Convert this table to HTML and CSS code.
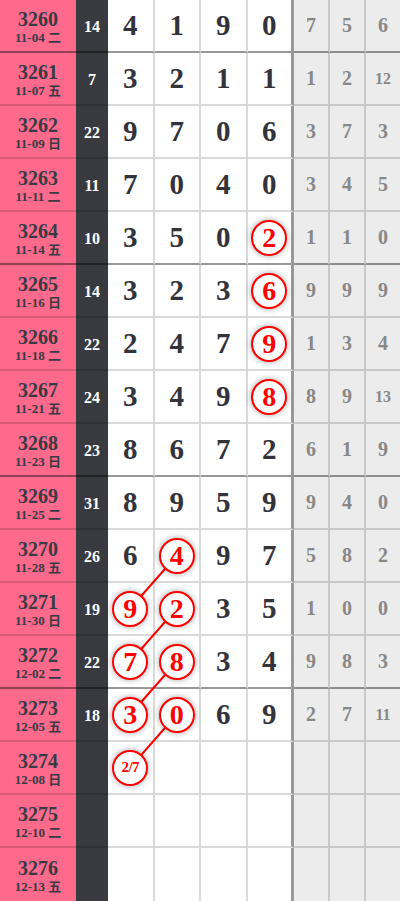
FILE: index.html
```html
<!DOCTYPE html>
<html lang="zh">
<head>
    <meta charset="UTF-8">
    <meta name="viewport" content="width=device-width, initial-scale=1.0">
    <title>走势图</title>
    <link rel="stylesheet" href="styles.css">
</head>
<body>

<div class="board">
    <!-- connecting lines behind the balls -->
    <svg class="links" width="400" height="901" viewBox="0 0 400 901">
        <line x1="176.75" y1="555.5" x2="130.25" y2="608.5"/>
        <line x1="176.75" y1="608.5" x2="130.25" y2="661.5"/>
        <line x1="176.75" y1="661.5" x2="130.25" y2="714.5"/>
        <line x1="176.75" y1="714.5" x2="130.25" y2="767.5"/>
    </svg>

    <div class="row group">
        <div class="cell issue"><b>3260</b><span>11-04 二</span></div>
        <div class="cell sum">14</div>
        <div class="cell num">4</div><div class="cell num">1</div><div class="cell num">9</div><div class="cell num last">0</div>
        <div class="cell gap">7</div><div class="cell gap">5</div><div class="cell gap end">6</div>
    </div>
    <div class="row">
        <div class="cell issue"><b>3261</b><span>11-07 五</span></div>
        <div class="cell sum">7</div>
        <div class="cell num">3</div><div class="cell num">2</div><div class="cell num">1</div><div class="cell num last">1</div>
        <div class="cell gap">1</div><div class="cell gap">2</div><div class="cell gap end small">12</div>
    </div>
    <div class="row">
        <div class="cell issue"><b>3262</b><span>11-09 日</span></div>
        <div class="cell sum">22</div>
        <div class="cell num">9</div><div class="cell num">7</div><div class="cell num">0</div><div class="cell num last">6</div>
        <div class="cell gap">3</div><div class="cell gap">7</div><div class="cell gap end">3</div>
    </div>
    <div class="row">
        <div class="cell issue"><b>3263</b><span>11-11 二</span></div>
        <div class="cell sum">11</div>
        <div class="cell num">7</div><div class="cell num">0</div><div class="cell num">4</div><div class="cell num last">0</div>
        <div class="cell gap">3</div><div class="cell gap">4</div><div class="cell gap end">5</div>
    </div>
    <div class="row group">
        <div class="cell issue"><b>3264</b><span>11-14 五</span></div>
        <div class="cell sum">10</div>
        <div class="cell num">3</div><div class="cell num">5</div><div class="cell num">0</div><div class="cell num last"><i class="ball">2</i></div>
        <div class="cell gap">1</div><div class="cell gap">1</div><div class="cell gap end">0</div>
    </div>
    <div class="row">
        <div class="cell issue"><b>3265</b><span>11-16 日</span></div>
        <div class="cell sum">14</div>
        <div class="cell num">3</div><div class="cell num">2</div><div class="cell num">3</div><div class="cell num last"><i class="ball">6</i></div>
        <div class="cell gap">9</div><div class="cell gap">9</div><div class="cell gap end">9</div>
    </div>
    <div class="row">
        <div class="cell issue"><b>3266</b><span>11-18 二</span></div>
        <div class="cell sum">22</div>
        <div class="cell num">2</div><div class="cell num">4</div><div class="cell num">7</div><div class="cell num last"><i class="ball">9</i></div>
        <div class="cell gap">1</div><div class="cell gap">3</div><div class="cell gap end">4</div>
    </div>
    <div class="row">
        <div class="cell issue"><b>3267</b><span>11-21 五</span></div>
        <div class="cell sum">24</div>
        <div class="cell num">3</div><div class="cell num">4</div><div class="cell num">9</div><div class="cell num last"><i class="ball">8</i></div>
        <div class="cell gap">8</div><div class="cell gap">9</div><div class="cell gap end small">13</div>
    </div>
    <div class="row group">
        <div class="cell issue"><b>3268</b><span>11-23 日</span></div>
        <div class="cell sum">23</div>
        <div class="cell num">8</div><div class="cell num">6</div><div class="cell num">7</div><div class="cell num last">2</div>
        <div class="cell gap">6</div><div class="cell gap">1</div><div class="cell gap end">9</div>
    </div>
    <div class="row">
        <div class="cell issue"><b>3269</b><span>11-25 二</span></div>
        <div class="cell sum">31</div>
        <div class="cell num">8</div><div class="cell num">9</div><div class="cell num">5</div><div class="cell num last">9</div>
        <div class="cell gap">9</div><div class="cell gap">4</div><div class="cell gap end">0</div>
    </div>
    <div class="row">
        <div class="cell issue"><b>3270</b><span>11-28 五</span></div>
        <div class="cell sum">26</div>
        <div class="cell num">6</div><div class="cell num"><i class="ball">4</i></div><div class="cell num">9</div><div class="cell num last">7</div>
        <div class="cell gap">5</div><div class="cell gap">8</div><div class="cell gap end">2</div>
    </div>
    <div class="row">
        <div class="cell issue"><b>3271</b><span>11-30 日</span></div>
        <div class="cell sum">19</div>
        <div class="cell num"><i class="ball">9</i></div><div class="cell num"><i class="ball">2</i></div><div class="cell num">3</div><div class="cell num last">5</div>
        <div class="cell gap">1</div><div class="cell gap">0</div><div class="cell gap end">0</div>
    </div>
    <div class="row group">
        <div class="cell issue"><b>3272</b><span>12-02 二</span></div>
        <div class="cell sum">22</div>
        <div class="cell num"><i class="ball">7</i></div><div class="cell num"><i class="ball">8</i></div><div class="cell num">3</div><div class="cell num last">4</div>
        <div class="cell gap">9</div><div class="cell gap">8</div><div class="cell gap end">3</div>
    </div>
    <div class="row">
        <div class="cell issue"><b>3273</b><span>12-05 五</span></div>
        <div class="cell sum">18</div>
        <div class="cell num"><i class="ball">3</i></div><div class="cell num"><i class="ball">0</i></div><div class="cell num">6</div><div class="cell num last">9</div>
        <div class="cell gap">2</div><div class="cell gap">7</div><div class="cell gap end small">11</div>
    </div>
    <div class="row">
        <div class="cell issue"><b>3274</b><span>12-08 日</span></div>
        <div class="cell sum"></div>
        <div class="cell num"><i class="ball guess">2/7</i></div><div class="cell num"></div><div class="cell num"></div><div class="cell num last"></div>
        <div class="cell gap"></div><div class="cell gap"></div><div class="cell gap end"></div>
    </div>
    <div class="row">
        <div class="cell issue"><b>3275</b><span>12-10 二</span></div>
        <div class="cell sum"></div>
        <div class="cell num"></div><div class="cell num"></div><div class="cell num"></div><div class="cell num last"></div>
        <div class="cell gap"></div><div class="cell gap"></div><div class="cell gap end"></div>
    </div>
    <div class="row tail">
        <div class="cell issue"><b>3276</b><span>12-13 五</span></div>
        <div class="cell sum"></div>
        <div class="cell num"></div><div class="cell num"></div><div class="cell num"></div><div class="cell num last"></div>
        <div class="cell gap"></div><div class="cell gap"></div><div class="cell gap end"></div>
    </div>
</div>

</body>
</html>
```

FILE: styles.css
```css
body {
    margin: 0;
    background: #ffffff;
    font-family: "Liberation Serif", "Noto Sans CJK SC", serif;
    font-weight: bold;
}

.board {
    position: relative;
    width: 400px;
    overflow: hidden;
}

.links {
    position: absolute;
    top: 0;
    left: 0;
    z-index: 0;
    pointer-events: none;
}

.links line {
    stroke: #ff0000;
    stroke-width: 2;
}

.row {
    display: grid;
    grid-template-columns: 76px 32px repeat(4, 46.5px) 36px 36px 34px;
    height: 53px;
}

.cell {
    box-sizing: border-box;
    display: flex;
    align-items: center;
    justify-content: center;
    border-bottom: 2px solid rgba(0, 0, 0, 0.15);
}

.row.group .cell {
    border-bottom-color: rgba(0, 0, 0, 0.4);
}

.row.tail .cell {
    border-bottom: none;
}

/* issue number + date */
.issue {
    flex-direction: column;
    background: #fe6a8b;
    color: #3a3a44;
    padding-top: 3px;
}

.issue b {
    font-size: 20px;
    line-height: 20px;
}

.issue span {
    font-size: 13px;
    line-height: 16px;
    margin-top: 1px;
}

/* sum column */
.sum {
    background: #393a40;
    color: #ffffff;
    font-size: 16px;
    padding-top: 2px;
}

/* drawn numbers */
.num {
    font-size: 29px;
    color: #33333b;
    border-right: 2px solid rgba(0, 0, 0, 0.15);
}

.num.last {
    border-right: 3px solid rgba(0, 0, 0, 0.4);
}

.ball {
    position: relative;
    z-index: 1;
    box-sizing: border-box;
    width: 36px;
    height: 36px;
    border: 2px solid #ff0000;
    border-radius: 50%;
    background: #ffffff;
    color: #ff0000;
    font-style: normal;
    font-size: 28px;
    display: flex;
    align-items: center;
    justify-content: center;
    box-shadow: 0 0 6px rgba(0, 0, 0, 0.35);
}

.ball.guess {
    font-size: 15px;
    letter-spacing: -0.5px;
}

/* gap / miss values */
.gap {
    background: #ececec;
    color: #888888;
    font-size: 20px;
    border-right: 2px solid rgba(0, 0, 0, 0.15);
}

.gap.end {
    border-right: none;
}

.gap.small {
    font-size: 16px;
}
```
